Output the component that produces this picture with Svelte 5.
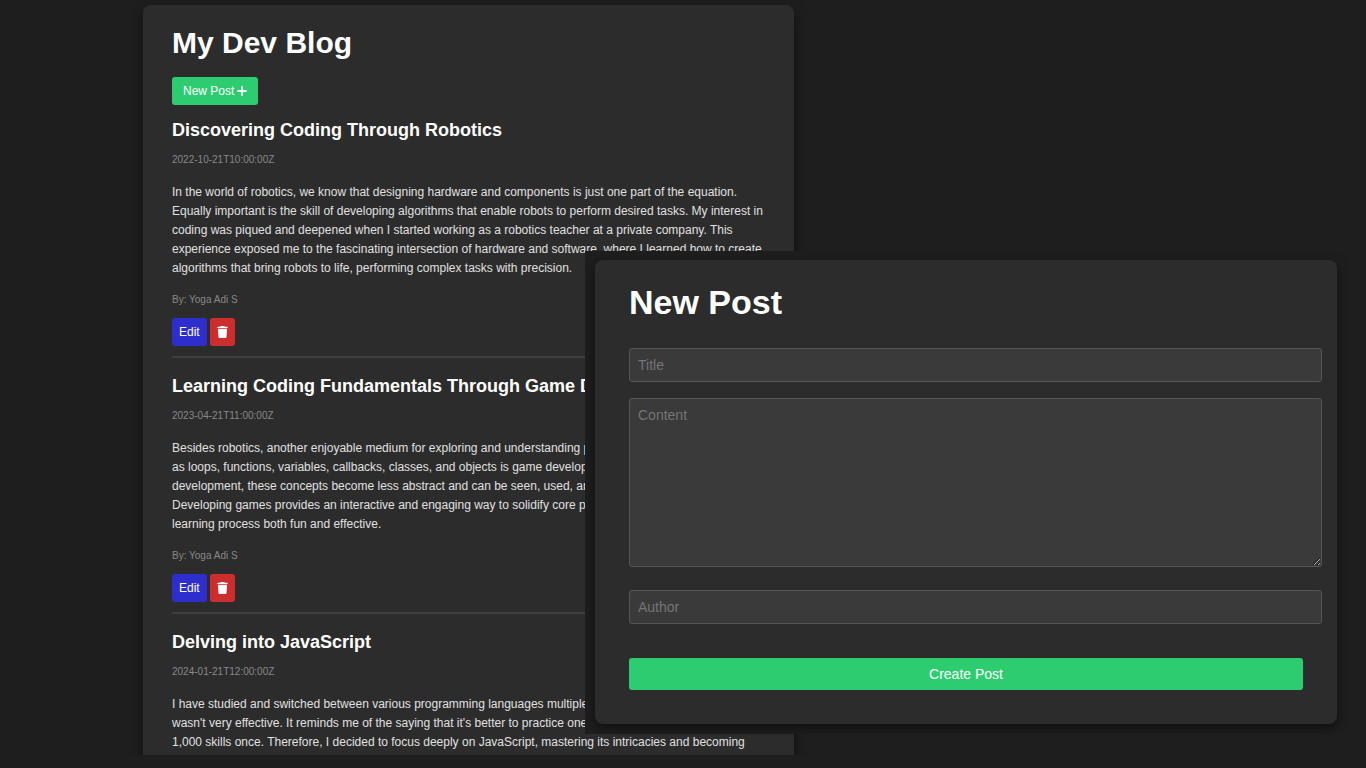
<script>
  const posts = [
    {
      title: 'Discovering Coding Through Robotics',
      date: '2022-10-21T10:00:00Z',
      content:
        'In the world of robotics, we know that designing hardware and components is just one part of the equation. Equally important is the skill of developing algorithms that enable robots to perform desired tasks. My interest in coding was piqued and deepened when I started working as a robotics teacher at a private company. This experience exposed me to the fascinating intersection of hardware and software, where I learned how to create algorithms that bring robots to life, performing complex tasks with precision.',
      author: 'Yoga Adi S'
    },
    {
      title: 'Learning Coding Fundamentals Through Game Development',
      date: '2023-04-21T11:00:00Z',
      content:
        'Besides robotics, another enjoyable medium for exploring and understanding programming fundamentals such as loops, functions, variables, callbacks, classes, and objects is game development. Through game development, these concepts become less abstract and can be seen, used, and observed in real time. Developing games provides an interactive and engaging way to solidify core programming skills, making the learning process both fun and effective.',
      author: 'Yoga Adi S'
    },
    {
      title: 'Delving into JavaScript',
      date: '2024-01-21T12:00:00Z',
      content:
        "I have studied and switched between various programming languages multiple times, but I soon found that it wasn't very effective. It reminds me of the saying that it's better to practice one skill 1,000 times rather than 1,000 skills once. Therefore, I decided to focus deeply on JavaScript, mastering its intricacies and becoming"
    }
  ];

  let title = $state('');
  let content = $state('');
  let author = $state('');
</script>

<div class="page">
  <div class="pane blog-pane">
    <main class="card blog">
      <h1>My Dev Blog</h1>
      <button class="btn new" type="button">
        New Post
        <svg viewBox="0 0 10 10" width="10" height="10" aria-hidden="true">
          <path d="M5 1v8M1 5h8" stroke="currentColor" stroke-width="1.8" stroke-linecap="round" />
        </svg>
      </button>

      {#each posts as post}
        <article>
          <h2>{post.title}</h2>
          <small>{post.date}</small>
          <p>{post.content}</p>
          {#if post.author}
            <small>By: {post.author}</small>
            <div class="actions">
              <button class="btn edit" type="button">Edit</button>
              <button class="btn delete" type="button" aria-label="Delete">
                <svg viewBox="0 0 448 512" width="11" height="12" aria-hidden="true">
                  <path
                    fill="currentColor"
                    d="M135 18L128 32H32C14 32 0 46 0 64s14 32 32 32h384c18 0 32-14 32-32s-14-32-32-32h-96l-7-14C307 7 296 0 284 0H164c-12 0-23 7-29 18zM416 128H32l21 339c2 25 23 45 48 45h246c25 0 46-20 48-45z"
                  />
                </svg>
              </button>
            </div>
          {/if}
        </article>
      {/each}
    </main>
  </div>

  <div class="pane form-pane">
    <section class="card editor">
      <h1>New Post</h1>
      <form onsubmit={(e) => e.preventDefault()}>
        <input type="text" placeholder="Title" aria-label="Title" bind:value={title} />
        <textarea placeholder="Content" aria-label="Content" bind:value={content}></textarea>
        <input type="text" placeholder="Author" aria-label="Author" bind:value={author} />
        <button class="btn create" type="submit">Create Post</button>
      </form>
    </section>
  </div>
</div>

<style>
  :global(body) {
    margin: 0;
    background: #1e1e1e;
  }

  .page {
    box-sizing: border-box;
    display: grid;
    grid-template-columns: 128fr 457fr 224fr 557fr;
    grid-template-rows: minmax(0, 1fr);
    height: 100vh;
    padding-bottom: 13px;
    background: #1e1e1e;
    color: #fff;
    font-family: 'Liberation Sans', Arial, sans-serif;
  }

  .pane {
    grid-row: 1;
    overflow: hidden;
    background: #1e1e1e;
  }

  .blog-pane {
    grid-column: 2 / 4;
    padding: 5px 15px 0;
  }

  .form-pane {
    grid-column: 3 / 5;
    align-self: end;
    margin-bottom: 21px;
    padding: 9px 29px 10px 10px;
  }

  .card {
    background: #2c2c2c;
    border-radius: 8px;
    box-shadow: 0 4px 12px rgba(0, 0, 0, 0.5);
  }

  h1,
  h2,
  p {
    margin: 0;
  }

  .blog {
    padding: 20px 29px;
  }

  .blog h1 {
    margin-bottom: 16px;
    font-size: 30px;
    line-height: 36px;
  }

  .btn {
    border: 0;
    border-radius: 3px;
    color: #fff;
    font-family: inherit;
    font-size: 12px;
    cursor: pointer;
  }

  .new {
    display: flex;
    align-items: center;
    gap: 3px;
    height: 28px;
    margin-bottom: 14px;
    padding: 0 11px;
    background: #2ecc71;
  }

  article {
    margin-bottom: 17px;
    padding-bottom: 10px;
    border-bottom: 2px solid #3e3e3e;
  }

  h2 {
    margin-bottom: 12px;
    font-size: 18px;
    line-height: 22px;
  }

  small {
    display: block;
    color: #888;
    font-size: 10px;
    line-height: 14px;
  }

  p {
    margin: 16px 0 15px;
    color: #e0e0e0;
    font-size: 12px;
    line-height: 19px;
  }

  .actions {
    display: flex;
    gap: 3px;
    margin-top: 11px;
  }

  .actions .btn {
    display: flex;
    align-items: center;
    height: 28px;
    padding: 0 7px;
  }

  .edit {
    background: #2e2ecc;
  }

  .delete {
    background: #cc2e2e;
  }

  .editor {
    padding: 22px 15px 34px 34px;
  }

  .editor h1 {
    margin-bottom: 25px;
    font-size: 34px;
    line-height: 41px;
  }

  form {
    display: flex;
    flex-direction: column;
  }

  input,
  textarea {
    box-sizing: border-box;
    width: 100%;
    margin: 0 0 16px;
    padding: 8px;
    border: 1px solid #555;
    border-radius: 3px;
    outline: 0;
    background: #3a3a3a;
    color: #fff;
    font-family: inherit;
    font-size: 14px;
  }

  input {
    height: 34px;
  }

  textarea {
    height: 169px;
    margin-bottom: 23px;
  }

  input::placeholder,
  textarea::placeholder {
    color: #757575;
  }

  .create {
    height: 32px;
    margin: 18px 19px 0 0;
    background: #2ecc71;
    font-size: 14px;
  }
</style>
